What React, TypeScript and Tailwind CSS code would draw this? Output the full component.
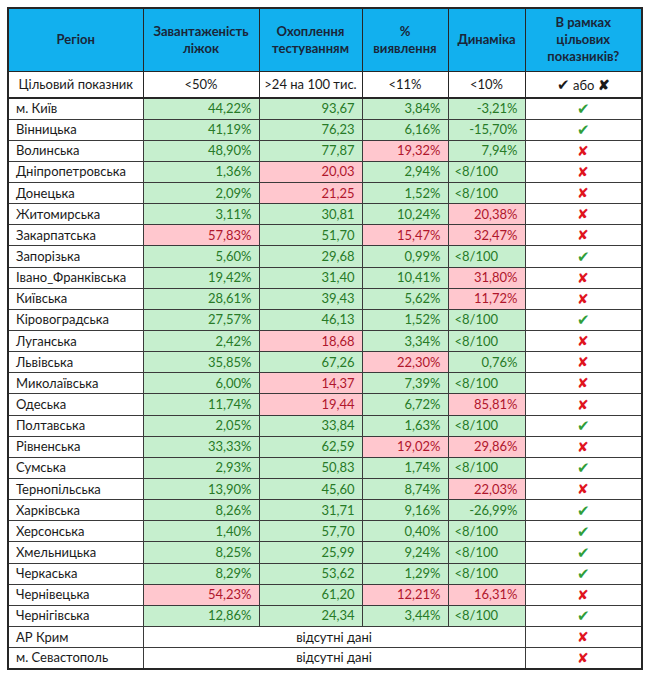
type Cell = [string, boolean?]; // [text, isRed]

type Row = {
  region: string;
  beds?: Cell;
  tests?: Cell;
  detect?: Cell;
  dyn?: Cell;
  ok: boolean;
};

const R = true;

const rows: Row[] = [
  { region: "м. Київ", beds: ["44,22%"], tests: ["93,67"], detect: ["3,84%"], dyn: ["-3,21%"], ok: true },
  { region: "Вінницька", beds: ["41,19%"], tests: ["76,23"], detect: ["6,16%"], dyn: ["-15,70%"], ok: true },
  { region: "Волинська", beds: ["48,90%"], tests: ["77,87"], detect: ["19,32%", R], dyn: ["7,94%"], ok: false },
  { region: "Дніпропетровська", beds: ["1,36%"], tests: ["20,03", R], detect: ["2,94%"], dyn: ["<8/100"], ok: false },
  { region: "Донецька", beds: ["2,09%"], tests: ["21,25", R], detect: ["1,52%"], dyn: ["<8/100"], ok: false },
  { region: "Житомирська", beds: ["3,11%"], tests: ["30,81"], detect: ["10,24%"], dyn: ["20,38%", R], ok: false },
  { region: "Закарпатська", beds: ["57,83%", R], tests: ["51,70"], detect: ["15,47%", R], dyn: ["32,47%", R], ok: false },
  { region: "Запорізька", beds: ["5,60%"], tests: ["29,68"], detect: ["0,99%"], dyn: ["<8/100"], ok: true },
  { region: "Івано_Франківська", beds: ["19,42%"], tests: ["31,40"], detect: ["10,41%"], dyn: ["31,80%", R], ok: false },
  { region: "Київська", beds: ["28,61%"], tests: ["39,43"], detect: ["5,62%"], dyn: ["11,72%", R], ok: false },
  { region: "Кіровоградська", beds: ["27,57%"], tests: ["46,13"], detect: ["1,52%"], dyn: ["<8/100"], ok: true },
  { region: "Луганська", beds: ["2,42%"], tests: ["18,68", R], detect: ["3,34%"], dyn: ["<8/100"], ok: false },
  { region: "Львівська", beds: ["35,85%"], tests: ["67,26"], detect: ["22,30%", R], dyn: ["0,76%"], ok: false },
  { region: "Миколаївська", beds: ["6,00%"], tests: ["14,37", R], detect: ["7,39%"], dyn: ["<8/100"], ok: false },
  { region: "Одеська", beds: ["11,74%"], tests: ["19,44", R], detect: ["6,72%"], dyn: ["85,81%", R], ok: false },
  { region: "Полтавська", beds: ["2,05%"], tests: ["33,84"], detect: ["1,63%"], dyn: ["<8/100"], ok: true },
  { region: "Рівненська", beds: ["33,33%"], tests: ["62,59"], detect: ["19,02%", R], dyn: ["29,86%", R], ok: false },
  { region: "Сумська", beds: ["2,93%"], tests: ["50,83"], detect: ["1,74%"], dyn: ["<8/100"], ok: true },
  { region: "Тернопільська", beds: ["13,90%"], tests: ["45,60"], detect: ["8,74%"], dyn: ["22,03%", R], ok: false },
  { region: "Харківська", beds: ["8,26%"], tests: ["31,71"], detect: ["9,16%"], dyn: ["-26,99%"], ok: true },
  { region: "Херсонська", beds: ["1,40%"], tests: ["57,70"], detect: ["0,40%"], dyn: ["<8/100"], ok: true },
  { region: "Хмельницька", beds: ["8,25%"], tests: ["25,99"], detect: ["9,24%"], dyn: ["<8/100"], ok: true },
  { region: "Черкаська", beds: ["8,29%"], tests: ["53,62"], detect: ["1,29%"], dyn: ["<8/100"], ok: true },
  { region: "Чернівецька", beds: ["54,23%", R], tests: ["61,20"], detect: ["12,21%", R], dyn: ["16,31%", R], ok: false },
  { region: "Чернігівська", beds: ["12,86%"], tests: ["24,34"], detect: ["3,44%"], dyn: ["<8/100"], ok: true },
  { region: "АР Крим", ok: false },
  { region: "м. Севастополь", ok: false },
];

const td = "h-[21.15px] p-0 border border-[#3a3a3a] leading-none";

function ValueCell({ cell }: { cell: Cell }) {
  const [text, red] = cell;
  const left = text.startsWith("<");
  return (
    <td
      className={`${td} ${red ? "bg-[#ffc7ce] text-[#b0162c]" : "bg-[#c6efce] text-[#277a27]"} ${
        left ? "text-left pl-[6px]" : "text-right pr-[7px]"
      }`}
    >
      {text}
    </td>
  );
}

function Mark({ ok }: { ok: boolean }) {
  return ok ? (
    <span className="text-[#2f9e3a] text-[15px]">✔</span>
  ) : (
    <span className="text-[#e0141e] text-[14px]">✘</span>
  );
}

export default function App() {
  return (
    <div className="bg-white w-[650px] h-[675px] pt-[7px] pl-[7px]" style={{ fontFamily: "Lato, 'Open Sans', sans-serif" }}>
      <table className="border-collapse border-2 border-[#262626] table-fixed text-[13px] text-[#1a1a1a]">
        <colgroup>
          <col className="w-[135px]" />
          <col className="w-[116px]" />
          <col className="w-[103px]" />
          <col className="w-[86px]" />
          <col className="w-[77px]" />
          <col className="w-[117px]" />
        </colgroup>
        <thead>
          <tr className="bg-[#12b0ee] text-[#1a2639] font-bold text-[13px] leading-[17px]">
            <th className="h-[63px] border border-[#262626] text-center">Регіон</th>
            <th className="border border-[#262626] text-center">
              Завантаженість
              <br />
              ліжок
            </th>
            <th className="border border-[#262626] text-center">
              Охоплення
              <br />
              тестуванням
            </th>
            <th className="border border-[#262626] text-center">
              %
              <br />
              виявлення
            </th>
            <th className="border border-[#262626] text-center">Динаміка</th>
            <th className="border border-[#262626] text-center">
              В рамках
              <br />
              цільових
              <br />
              показників?
            </th>
          </tr>
        </thead>
        <tbody>
          <tr className="text-center">
            <td className="h-[27px] p-0 border border-[#262626] border-b-2">Цільовий показник</td>
            <td className="p-0 border border-[#262626] border-b-2">&lt;50%</td>
            <td className="p-0 border border-[#262626] border-b-2">&gt;24 на 100 тис.</td>
            <td className="p-0 border border-[#262626] border-b-2">&lt;11%</td>
            <td className="p-0 border border-[#262626] border-b-2">&lt;10%</td>
            <td className="p-0 border border-[#262626] border-b-2">
              <span className="text-[15px]">✔</span> або <span className="text-[14px] font-bold">✘</span>
            </td>
          </tr>
          {rows.map((r) => (
            <tr key={r.region}>
              <td className={`${td} pl-[7px] text-left`}>{r.region}</td>
              {r.beds && r.tests && r.detect && r.dyn ? (
                <>
                  <ValueCell cell={r.beds} />
                  <ValueCell cell={r.tests} />
                  <ValueCell cell={r.detect} />
                  <ValueCell cell={r.dyn} />
                </>
              ) : (
                <td colSpan={4} className={`${td} text-center`}>
                  відсутні дані
                </td>
              )}
              <td className={`${td} text-center`}>
                <Mark ok={r.ok} />
              </td>
            </tr>
          ))}
        </tbody>
      </table>
    </div>
  );
}
